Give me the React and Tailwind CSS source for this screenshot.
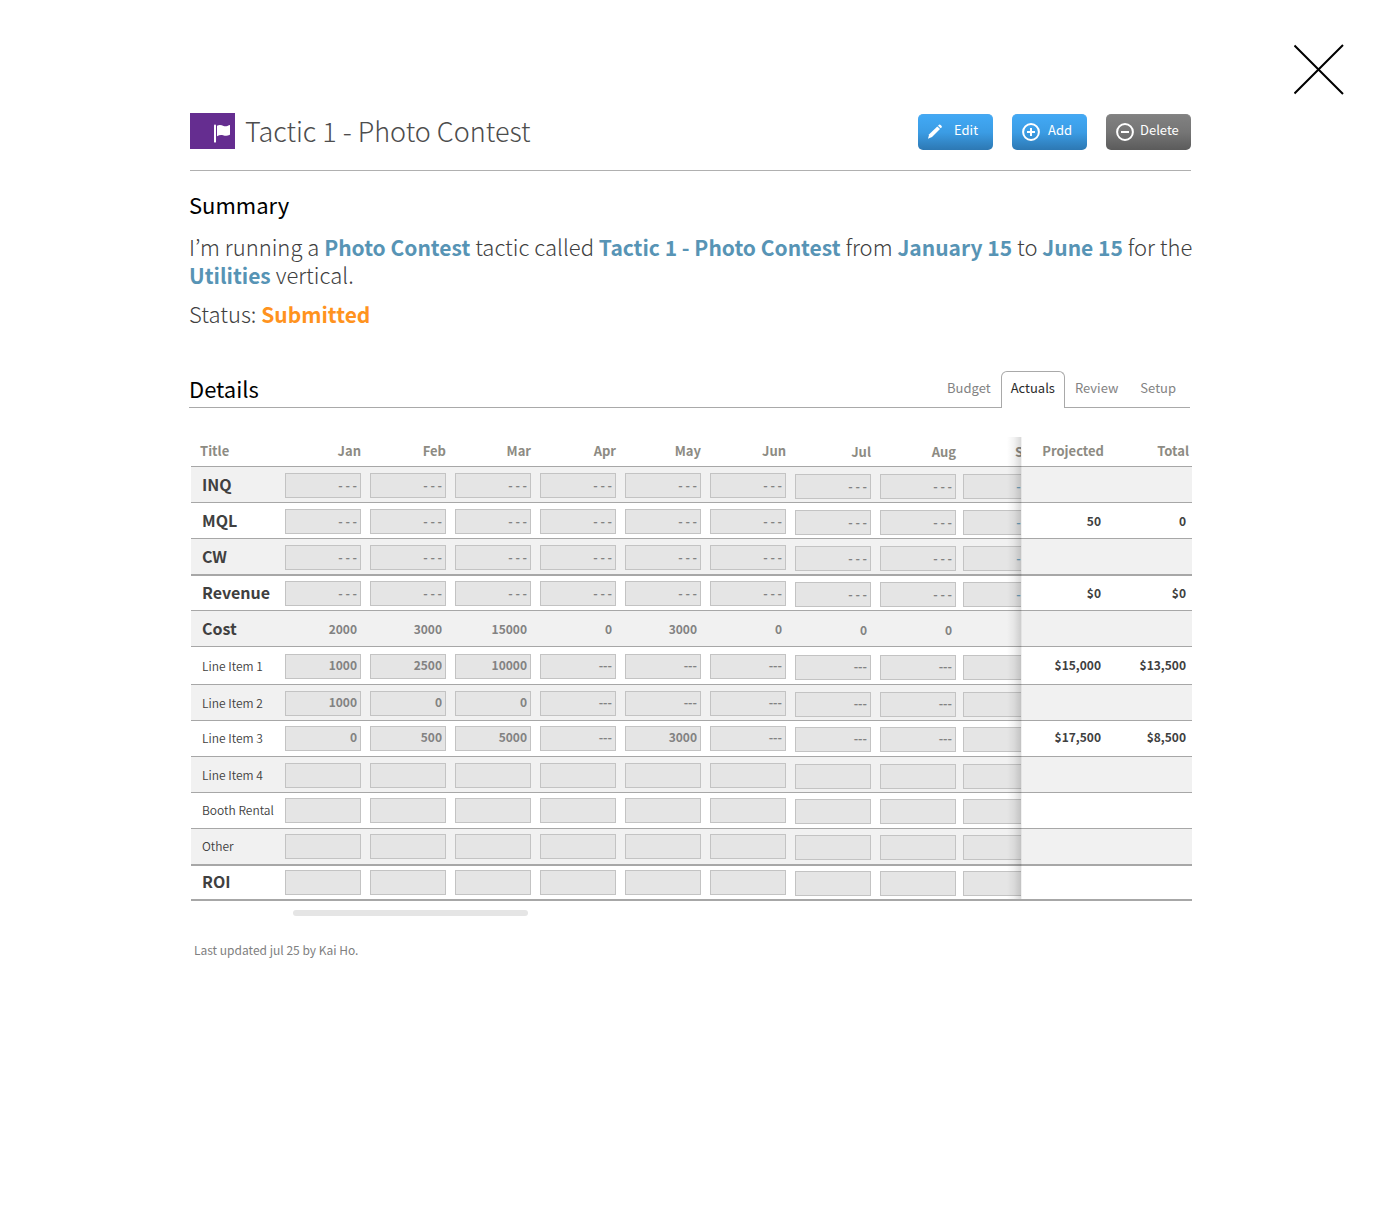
import React from "react";

const MONTHS = ["Jan", "Feb", "Mar", "Apr", "May", "Jun", "Jul", "Aug", "Sep"];

const fill = (value, count = 9) => Array.from({ length: count }, () => value);
const wide = fill("- - -");
const line = (...values) => [...values, ...fill("---", 8 - values.length), ""];

const ROWS = [
  { title: "INQ", strong: true, shaded: true, size: "h-9 pt-1.5", cells: wide },
  { title: "MQL", strong: true, size: "h-9 pt-1.5", cells: wide, projected: "50", total: "0" },
  { title: "CW", strong: true, shaded: true, heavy: true, size: "h-[37px] pt-1.5", cells: wide },
  { title: "Revenue", strong: true, size: "h-[35px] pt-[5px]", cells: wide, projected: "$0", total: "$0" },
  {
    title: "Cost",
    strong: true,
    shaded: true,
    plain: true,
    size: "h-9 pt-1.5",
    cells: ["2000", "3000", "15000", "0", "3000", "0", "0", "0", ""],
  },
  {
    title: "Line Item 1",
    size: "h-[38px] pt-[7px]",
    cells: line("1000", "2500", "10000"),
    projected: "$15,000",
    total: "$13,500",
  },
  { title: "Line Item 2", shaded: true, size: "h-9 pt-1.5", cells: line("1000", "0", "0") },
  {
    title: "Line Item 3",
    size: "h-9 pt-[5px]",
    cells: line("0", "500", "5000", "---", "3000"),
    projected: "$17,500",
    total: "$8,500",
  },
  { title: "Line Item 4", shaded: true, size: "h-9 pt-1.5", cells: fill("") },
  { title: "Booth Rental", size: "h-9 pt-[5px]", cells: fill("") },
  { title: "Other", shaded: true, heavy: true, size: "h-[37px] pt-[5px]", cells: fill("") },
  { title: "ROI", strong: true, heavy: true, size: "h-[35px] pt-1", cells: fill("") },
];

function FlagIcon() {
  return (
    <svg viewBox="0 0 17 19" className="h-[19px] w-[17px]" fill="#fff" aria-hidden="true">
      <path d="M0 1.2 Q0 .4 1 .4 Q2 .4 2 1.2 V18 Q2 18.6 1 18.6 Q0 18.6 0 18 Z" />
      <path d="M3 1.8 C5.5 .4 7.6 1.2 9.6 2 C11.6 2.8 13.6 2 15.3 1 Q16 .8 16 1.5 V10.2 Q16 10.8 15.4 11.1 C13 12.3 11 11.9 9 11.2 C7 10.6 5 11 3 12.3 Z" />
    </svg>
  );
}

function PencilIcon() {
  return (
    <svg viewBox="0 0 18 18" className="h-[18px] w-[18px]" fill="#fff" aria-hidden="true">
      <path d="M3.2 11.3 L11.3 3.4 L14 6 L6 14 L2 15.8 Z" />
      <path d="M12 2.7 L13 1.8 Q13.8 1.2 14.6 1.9 L15.6 2.9 Q16.2 3.7 15.6 4.4 L14.7 5.3 Z" />
    </svg>
  );
}

function CircleIcon({ plus }) {
  return (
    <svg viewBox="0 0 18 18" className="h-[18px] w-[18px]" fill="none" stroke="#fff" strokeWidth="2" aria-hidden="true">
      <circle cx="9" cy="9" r="7.9" />
      <path d={plus ? "M5 9 H13 M9 5 V13" : "M5 9 H13"} />
    </svg>
  );
}

const BLUE = "border-[#49a7ee] from-[#42a9f5] via-[#3b9ce4] to-[#2d78b3]";
const GRAY = "border-[#858585] from-[#818181] via-[#757575] to-[#5b5b5b]";

function ActionButton({ icon, label, tone, shape }) {
  return (
    <button
      type="button"
      className={`flex h-9 items-center rounded-[5px] border-t bg-linear-to-b pb-0.5 text-[13px] leading-5 text-white ${tone} ${shape}`}
    >
      {icon}
      <span className="pb-1">{label}</span>
    </button>
  );
}

function Tab({ label, active, inset = "px-2.5" }) {
  return (
    <button
      type="button"
      role="tab"
      aria-selected={Boolean(active)}
      className={
        active
          ? "-mb-px h-[37px] rounded-t-md border border-b-0 border-[#a9a9a9] bg-white px-[9px] pb-1 text-[#2b2b2b]"
          : `h-9 pb-0.5 text-[#838383] ${inset}`
      }
    >
      {label}
    </button>
  );
}

function MonthCell({ row, month, value, index }) {
  const drop = index > 5 ? "mt-px" : "";
  const color = index === 8 ? "text-[#6fa3bd]" : "text-[#828282]";
  const lift = row.strong ? "pb-0.5" : "pb-1";
  return (
    <div className={`overflow-hidden ${drop}`}>
      {row.plain ? (
        <div className="h-[25px] w-[76px] pr-1 text-right text-xs leading-6 font-bold text-[#828282]">{value}</div>
      ) : (
        <input
          type="text"
          aria-label={`${row.title} ${month}`}
          defaultValue={value}
          className={`block h-[25px] w-[76px] border border-[#c3c3c3] bg-[#e5e5e5] pr-[3px] text-right text-xs font-bold ${lift} ${color}`}
        />
      )}
    </div>
  );
}

function DetailsTable() {
  return (
    <div className="relative">
      <table className="w-full table-fixed border-separate border-spacing-0">
        <colgroup>
          <col className="w-[94px]" />
          {MONTHS.map((m, i) => (
            <col key={m} className={i === 8 ? "" : i === 7 ? "w-[83px]" : "w-[85px]"} />
          ))}
          <col className="w-[86px]" />
          <col className="w-[85px]" />
        </colgroup>
        <thead>
          <tr className="h-[30px] text-[13px] leading-5 font-bold text-[#8d8b83]">
            <th scope="col" className="border-b border-[#a7a7a7] pt-1 pb-1 pl-[9px] text-left align-top">
              Title
            </th>
            {MONTHS.map((m, i) => (
              <th key={m} scope="col" className="border-b border-[#a7a7a7] p-0 pt-1 align-top">
                <div className="overflow-hidden">
                  <div className={`w-[76px] text-right ${i > 5 ? "pt-px" : ""}`}>{m}</div>
                </div>
              </th>
            ))}
            <th scope="col" className="border-b border-[#a7a7a7] pt-1 pr-[3px] text-right align-top">
              Projected
            </th>
            <th scope="col" className="border-b border-[#a7a7a7] pt-1 pr-[3px] text-right align-top">
              Total
            </th>
          </tr>
        </thead>
        <tbody>
          {ROWS.map((row) => {
            const cell = `align-top border-[#a7a7a7] ${row.size} ${row.heavy ? "border-b-2" : "border-b"}`;
            const sum = `${cell} pr-[6px] text-right text-xs font-bold text-[#404040] ${
              row.strong ? "leading-6" : "leading-[22px]"
            }`;
            return (
              <tr key={row.title} className={row.shaded ? "bg-[#f1f1f1]" : "bg-white"}>
                <th
                  scope="row"
                  className={`${cell} pl-[11px] text-left whitespace-nowrap text-[#404040] ${
                    row.strong ? "text-base leading-[22px] font-bold" : "text-xs leading-6 font-[350]"
                  }`}
                >
                  {row.title}
                </th>
                {row.cells.map((value, i) => (
                  <td key={MONTHS[i]} className={cell}>
                    <MonthCell row={row} month={MONTHS[i]} value={value} index={i} />
                  </td>
                ))}
                <td className={sum}>{row.projected}</td>
                <td className={sum}>{row.total}</td>
              </tr>
            );
          })}
        </tbody>
      </table>
      <div className="pointer-events-none absolute top-0 right-[170px] bottom-0.5 flex">
        <div className="w-3.5 bg-linear-to-r from-transparent via-black/5 to-black/15" />
        <div className="w-px bg-black/5" />
      </div>
    </div>
  );
}

const Key = ({ children }) => (
  <strong className="text-[21px] leading-none font-bold text-[#5794b5]">{children}</strong>
);

export default function App() {
  return (
    <div className="relative min-h-screen bg-white px-4 pt-[113px] pb-16 font-['Noto_Sans_CJK_KR',sans-serif]">
      <button type="button" aria-label="Close" className="absolute top-11 right-[35px]">
        <svg viewBox="0 0 51 51" className="h-[51px] w-[51px]" stroke="#000" strokeWidth="2" aria-hidden="true">
          <path d="M.5 1.5 L49 50 M49 1 L.5 49.5" />
        </svg>
      </button>

      <main className="mx-auto max-w-[1004px]">
        <header className="mr-px ml-0.5 flex items-start border-b border-[#b0b0b0] pb-5">
          <div className="flex h-9 w-[45px] items-center justify-end bg-[#652d90] pt-1 pr-1">
            <FlagIcon />
          </div>
          <h1 className="flex-1 pl-2.5 text-[27px] leading-9 font-light text-[#4d4d4d]">Tactic 1 - Photo Contest</h1>
          <div className="flex gap-[19px] pt-px">
            <ActionButton icon={<PencilIcon />} label="Edit" tone={BLUE} shape="w-[75px] gap-2.5 pl-2" />
            <ActionButton icon={<CircleIcon plus />} label="Add" tone={BLUE} shape="w-[75px] gap-2 pl-2.5" />
            <ActionButton icon={<CircleIcon />} label="Delete" tone={GRAY} shape="w-[85px] gap-1.5 pl-2.5" />
          </div>
        </header>

        <section className="-mr-2 pt-[19px] pl-px">
          <h2 className="text-[22px] leading-7 text-black">Summary</h2>
          <p className="mt-3.5 text-[22px] leading-7 font-light text-[#404040]">
            I’m running a <Key>Photo Contest</Key> tactic called <Key>Tactic 1 - Photo Contest</Key> from{" "}
            <Key>January 15</Key> to <Key>June 15</Key> for the <Key>Utilities</Key> vertical.
          </p>
          <p className="mt-[11px] text-[22px] leading-7 font-light text-[#404040]">
            Status: <strong className="text-[21px] leading-none font-bold text-[#ff931e]">Submitted</strong>
          </p>
        </section>

        <section className="pt-11">
          <div className="mr-0.5 ml-px flex items-end justify-between border-b border-[#a9a9a9]">
            <h2 className="pb-[5px] text-[22px] leading-7 text-black">Details</h2>
            <div role="tablist" className="flex items-end pr-0.5 text-[13px] leading-5">
              <Tab label="Budget" />
              <Tab label="Actuals" active />
              <Tab label="Review" />
              <Tab label="Setup" inset="px-3" />
            </div>
          </div>

          <div className="mt-[29px] ml-[3px]">
            <DetailsTable />
          </div>
          <div className="mt-[9px] ml-[105px] h-1.5 w-[235px] rounded-full bg-[#e5e5e5]" />
          <p className="mt-6 ml-1.5 text-xs leading-5 text-[#808080]">Last updated jul 25 by Kai Ho.</p>
        </section>
      </main>
    </div>
  );
}
